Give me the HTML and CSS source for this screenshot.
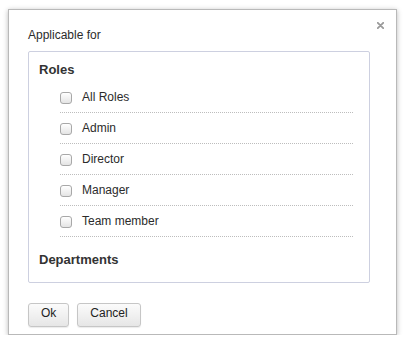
FILE: index.html
```html
<!DOCTYPE html>
<html lang="en">
<head>
  <meta charset="UTF-8" />
  <meta name="viewport" content="width=device-width, initial-scale=1.0"/>
  <title>Applicable for</title>
  <link rel="stylesheet" href="styles.css">
</head>
<body>

  <div class="dialog">
    <div class="dialog-header">
      <span class="dialog-title">Applicable for</span>
      <button class="close-btn" aria-label="Close">
        <svg width="7" height="7" viewBox="0 0 7 7">
          <path d="M0.8 0.8 L6.2 6.2 M6.2 0.8 L0.8 6.2" stroke="#9a9a9a" stroke-width="1.8" stroke-linecap="round" />
        </svg>
      </button>
    </div>

    <div class="group-box">
      <h3 class="group-title">Roles</h3>
      <ul class="option-list">
        <li><label><input type="checkbox"> All Roles</label></li>
        <li><label><input type="checkbox"> Admin</label></li>
        <li><label><input type="checkbox"> Director</label></li>
        <li><label><input type="checkbox"> Manager</label></li>
        <li><label><input type="checkbox"> Team member</label></li>
      </ul>
      <h3 class="group-title departments">Departments</h3>
    </div>

    <div class="actions">
      <button class="btn">Ok</button>
      <button class="btn">Cancel</button>
    </div>
  </div>

</body>
</html>
```

FILE: styles.css
```css
* { box-sizing: border-box; }

body {
  margin: 0;
  background: #fff;
  font-family: "Liberation Sans", Arial, sans-serif;
  font-size: 12px;
  color: #2b2b2b;
}

.dialog {
  width: 389px;
  height: 326px;
  margin: 9px 0 0 8px;
  padding: 17px 12px 6px 19px;
  background: #fff;
  border: 1px solid #b9b9b9;
  box-shadow: 0 1px 5px rgba(0, 0, 0, 0.28);
}

.dialog-header {
  display: flex;
  justify-content: space-between;
  align-items: flex-start;
}

.dialog-title {
  line-height: 16px;
}

.close-btn {
  margin-top: -5px;
  padding: 0;
  border: none;
  background: none;
  width: 7px;
  height: 7px;
  cursor: pointer;
}

.close-btn svg { display: block; }

.group-box {
  margin: 8px 14px 0 0;
  padding: 10px 16px 14px 10px;
  border: 1px solid #cdd0e0;
  border-radius: 2px;
}

.group-title {
  margin: 0;
  font-size: 13px;
  font-weight: bold;
  line-height: 16px;
  color: #333;
}

.group-title.departments {
  margin-top: 15px;
}

.option-list {
  list-style: none;
  margin: 4px 0 0 21px;
  padding: 0;
}

.option-list li {
  padding: 7px 0 7px;
  border-bottom: 1px dotted #bdbdbd;
  line-height: 16px;
}

.option-list label {
  display: flex;
  align-items: center;
  gap: 10px;
  cursor: pointer;
}

.option-list input {
  appearance: none;
  -webkit-appearance: none;
  width: 12px;
  height: 12px;
  margin: 1px 0 0;
  border: 1px solid #a8a8a8;
  border-radius: 3px;
  background: linear-gradient(#ffffff, #e4e4e4);
}

.actions {
  display: flex;
  gap: 8px;
  margin-top: 20px;
}

.btn {
  padding: 2px 12px 6px;
  font-family: inherit;
  font-size: 12px;
  line-height: 14px;
  color: #222;
  border: 1px solid #c6c6c6;
  border-radius: 3px;
  background: linear-gradient(#fbfbfb, #e6e6e6);
  box-shadow: 0 1px 1px rgba(0, 0, 0, 0.08);
  cursor: pointer;
}
```
